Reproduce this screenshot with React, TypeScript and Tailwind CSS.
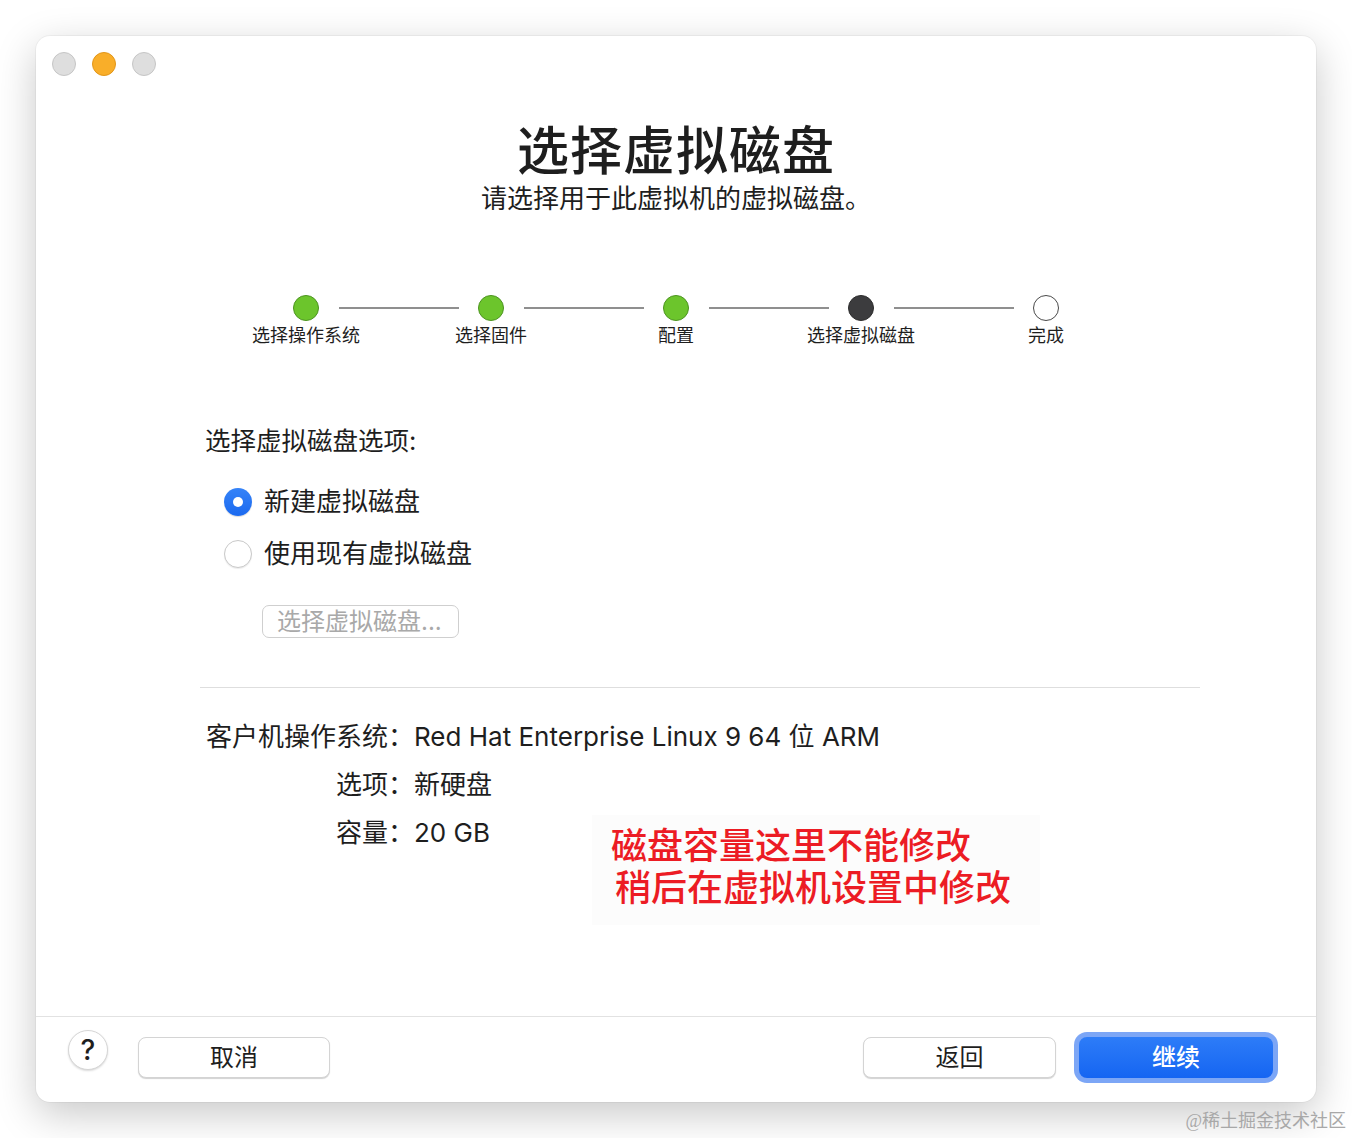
const font = "font-['Inter','Noto_Sans_CJK_SC',sans-serif]";

const steps = [
  { label: "选择操作系统", state: "done" },
  { label: "选择固件", state: "done" },
  { label: "配置", state: "done" },
  { label: "选择虚拟磁盘", state: "current" },
  { label: "完成", state: "todo" },
];

function StepDot({ state }: { state: string }) {
  if (state === "done") {
    return <div className="w-[26px] h-[26px] rounded-full bg-[#6cc52c] border-[1.5px] border-[#4c9420]" />;
  }
  if (state === "current") {
    return <div className="w-[26px] h-[26px] rounded-full bg-[#3c3c3e] border-[1.5px] border-[#2c2c2c]" />;
  }
  return <div className="w-[26px] h-[26px] rounded-full bg-white border-[1.5px] border-[#4a4a4a]" />;
}

const info = [
  { k: "客户机操作系统：", v: "Red Hat Enterprise Linux 9 64 位 ARM" },
  { k: "选项：", v: "新硬盘" },
  { k: "容量：", v: "20 GB" },
];

export default function App() {
  return (
    <div className={`relative w-[1352px] h-[1138px] bg-white ${font} text-[#1e1e1e]`}>
      <div className="p-[36px]">
        {/* Window */}
        <div className="relative w-[1280px] h-[1066px] rounded-[14px] bg-white shadow-[0_12px_40px_rgba(0,0,0,0.22),0_0_0_1px_rgba(0,0,0,0.04)] flex flex-col">
          {/* Traffic lights */}
          <div className="flex gap-4 pt-[16px] pl-[16px]">
            <div className="w-[24px] h-[24px] rounded-full bg-[#dedede] border border-[#c6c6c6]" />
            <div className="w-[24px] h-[24px] rounded-full bg-[#f9ae29] border border-[#e2961a]" />
            <div className="w-[24px] h-[24px] rounded-full bg-[#dedede] border border-[#c6c6c6]" />
          </div>

          {/* Header */}
          <h1 className="mt-[46px] text-center text-[52px] leading-[60px] font-medium tracking-[1px]">选择虚拟磁盘</h1>
          <p className="mt-[1px] text-center text-[26px] leading-[32px]">请选择用于此虚拟机的虚拟磁盘。</p>

          {/* Steps */}
          <div className="mt-[80px] flex items-center justify-center gap-[19.5px]">
            {steps.map((s, i) => (
              <div key={s.label} className="flex items-center gap-[19.5px]">
                {i > 0 && <div className="w-[120px] h-[2px] bg-[#8f8f8f]" />}
                <StepDot state={s.state} />
              </div>
            ))}
          </div>
          <div className="mt-[3px] flex justify-center">
            {steps.map((s) => (
              <div key={s.label} className="w-[185px] text-center text-[18px] leading-[24px]">
                {s.label}
              </div>
            ))}
          </div>

          {/* Disk options */}
          <div className="pl-[169px] mt-[76px] text-[25.5px] leading-[34px]">选择虚拟磁盘选项:</div>
          <div className="pl-[188px] mt-[26px] flex flex-col gap-4">
            <div className="flex items-center gap-3 h-[36px]">
              <div className="w-[28px] h-[28px] rounded-full bg-gradient-to-b from-[#3583f8] to-[#1b69ef] flex items-center justify-center shadow-[0_1px_1px_rgba(0,0,0,0.15)]">
                <div className="w-[10px] h-[10px] rounded-full bg-white" />
              </div>
              <span className="text-[26px] leading-[36px]">新建虚拟磁盘</span>
            </div>
            <div className="flex items-center gap-3 h-[36px]">
              <div className="w-[28px] h-[28px] rounded-full bg-white border border-[#c9c9c9] shadow-[0_1px_1px_rgba(0,0,0,0.08)]" />
              <span className="text-[26px] leading-[36px]">使用现有虚拟磁盘</span>
            </div>
          </div>
          <div className="pl-[226px] mt-[33px]">
            <div className="w-[197px] h-[33px] rounded-[7px] border-[1.5px] border-[#cfcfcf] flex items-center pl-[14px] text-[24px] leading-[30px] text-[#a9a9a9]">
              选择虚拟磁盘...
            </div>
          </div>

          <div className="ml-[164px] mt-[49px] w-[1000px] h-px bg-[#dedede]" />

          {/* Summary */}
          <div className="pl-[169px] mt-[25px] flex flex-col text-[26px] leading-[48px]">
            {info.map((r) => (
              <div key={r.k} className="flex">
                <div className="w-[209px] text-right">{r.k}</div>
                <div>{r.v}</div>
              </div>
            ))}
          </div>

          {/* Annotation */}
          <div className="absolute left-[556px] top-[779px] w-[448px] h-[110px] bg-[#fcfcfc] pl-[19px] pt-[10px] text-[36px] leading-[42px] text-[#ec1c24] font-medium">
            <div>磁盘容量这里不能修改</div>
            <div className="pl-[4px]">稍后在虚拟机设置中修改</div>
          </div>

          {/* Footer */}
          <div className="mt-auto h-[86px] border-t border-[#e2e2e2] flex items-start pl-[32px] pr-[38px]">
            <div className="mt-[13px] w-[40px] h-[40px] rounded-full bg-white border border-[#d6d6d6] shadow-[0_1px_2px_rgba(0,0,0,0.15)] flex items-center justify-center text-[28px] leading-none font-medium">
              ?
            </div>
            <button className="ml-[30px] mt-[20px] w-[192px] h-[41px] rounded-[8px] bg-white border border-[#d4d4d4] shadow-[0_1px_1px_rgba(0,0,0,0.18)] text-[24px] leading-[32px]">
              取消
            </button>
            <div className="flex-1" />
            <button className="mt-[20px] w-[193px] h-[41px] rounded-[8px] bg-white border border-[#d4d4d4] shadow-[0_1px_1px_rgba(0,0,0,0.18)] text-[24px] leading-[32px]">
              返回
            </button>
            <div className="ml-[18px] mt-[15px] p-[5px] rounded-[13px] bg-[#7ca6f6]">
              <button className="w-[194px] h-[41px] rounded-[8px] bg-gradient-to-b from-[#2d7cf8] to-[#1565f2] text-white text-[24px] leading-[32px] font-medium">
                继续
              </button>
            </div>
          </div>
        </div>
      </div>

      <div className="absolute right-[6px] bottom-[5px] text-[18px] leading-[24px] text-[#a8a8a8] font-['Liberation_Serif','Noto_Sans_CJK_SC',serif]">
        @稀土掘金技术社区
      </div>
    </div>
  );
}
